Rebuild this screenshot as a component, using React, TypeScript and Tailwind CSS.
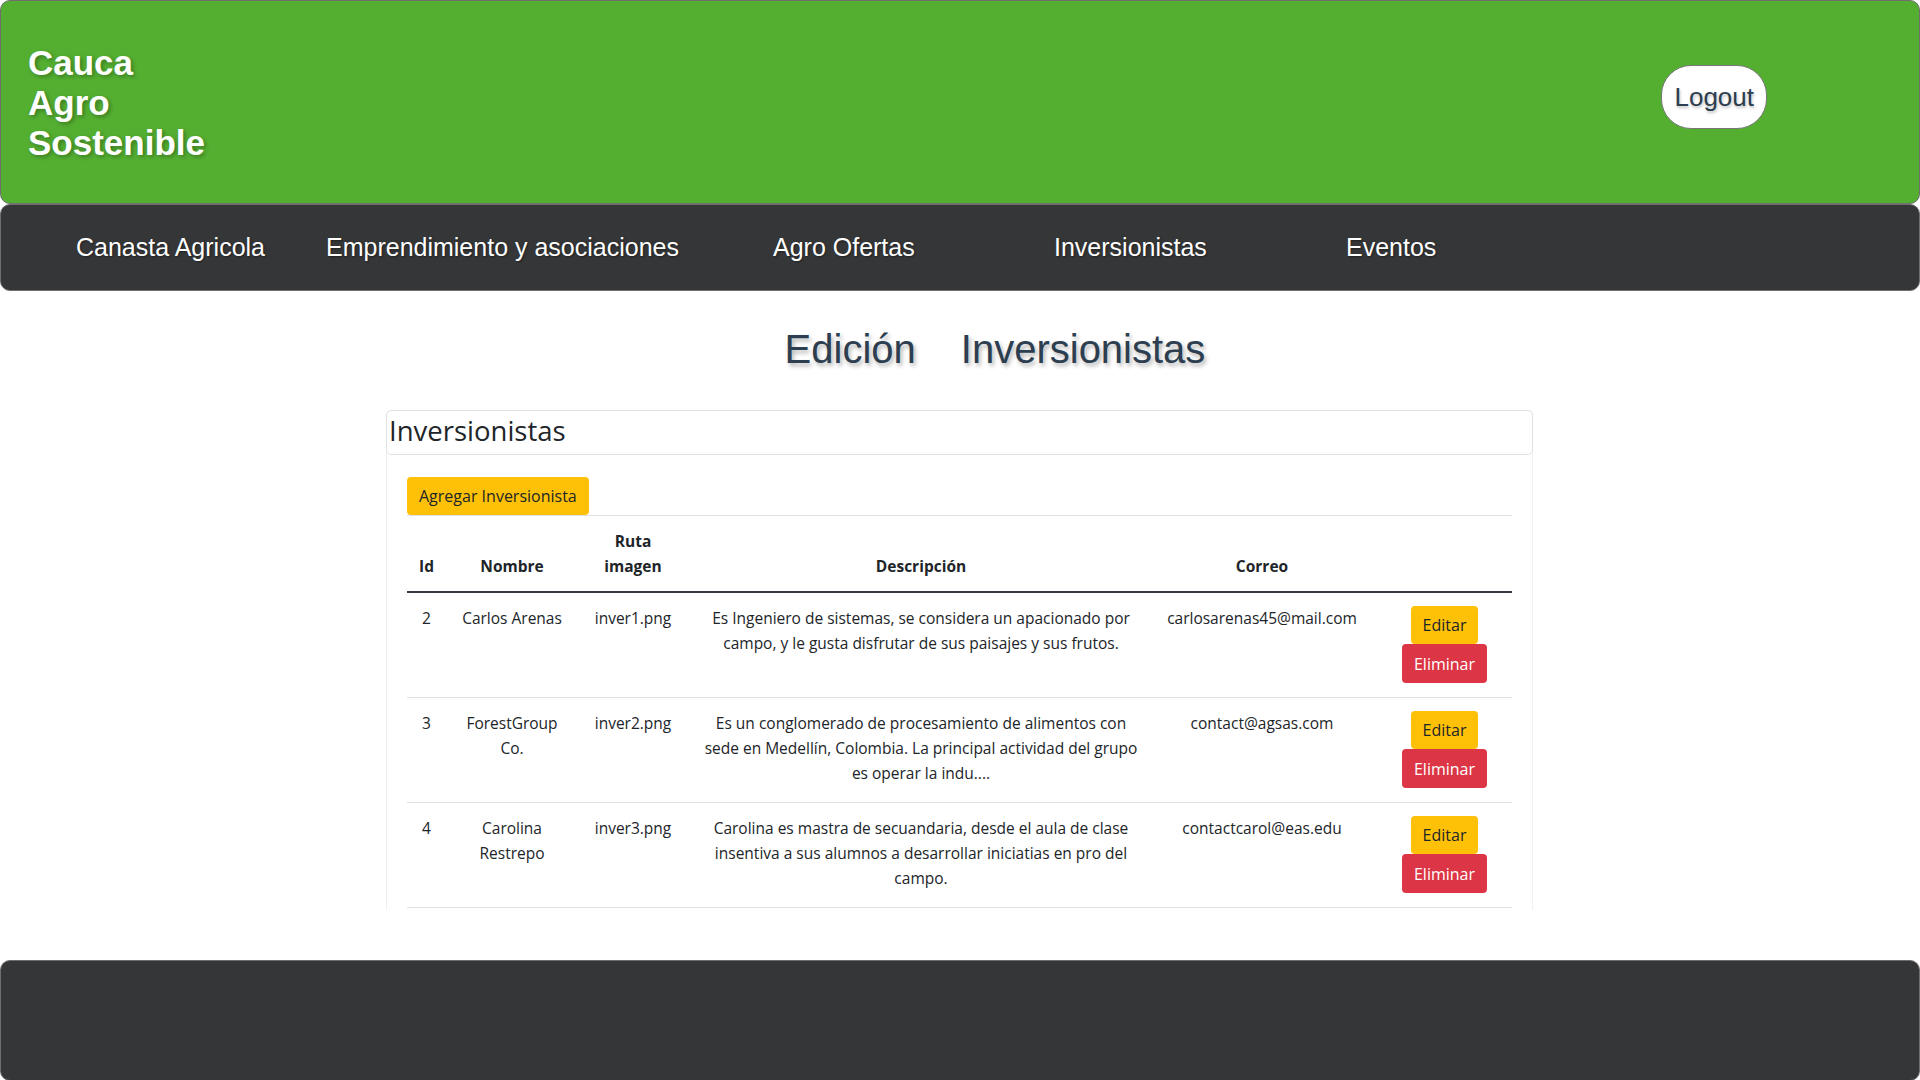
const navItems = [
  { label: 'Canasta Agricola', width: 'w-[250px]' },
  { label: 'Emprendimiento y asociaciones', width: 'w-[447px]' },
  { label: 'Agro Ofertas', width: 'w-[281px]' },
  { label: 'Inversionistas', width: 'w-[292px]' },
  { label: 'Eventos', width: '' },
];

const investors = [
  {
    id: 2,
    name: ['Carlos Arenas'],
    image: 'inver1.png',
    description: [
      'Es Ingeniero de sistemas, se considera un apacionado por',
      'campo, y le gusta disfrutar de sus paisajes y sus frutos.',
    ],
    email: 'carlosarenas45@mail.com',
  },
  {
    id: 3,
    name: ['ForestGroup', 'Co.'],
    image: 'inver2.png',
    description: [
      'Es un conglomerado de procesamiento de alimentos con',
      'sede en Medellín, Colombia. La principal actividad del grupo',
      'es operar la indu....',
    ],
    email: 'contact@agsas.com',
  },
  {
    id: 4,
    name: ['Carolina', 'Restrepo'],
    image: 'inver3.png',
    description: [
      'Carolina es mastra de secuandaria, desde el aula de clase',
      'insentiva a sus alumnos a desarrollar iniciatias en pro del',
      'campo.',
    ],
    email: 'contactcarol@eas.edu',
  },
];

export default function App() {
  return (
    <div className="min-h-screen bg-white font-['Liberation_Sans',Arial,sans-serif]">
      {/* encabezado */}
      <header className="h-[204px] bg-[#54af31] border border-[#6e6e6e] rounded-[10px] flex items-center justify-between pl-[27px] pr-[152px]">
        <h1 className="mt-[2px] text-[35px] leading-[40px] font-bold text-white [text-shadow:2px_2px_4px_rgba(0,0,0,0.3)]">
          Cauca
          <br />
          Agro
          <br />
          Sostenible
        </h1>
        <button className="mb-[10px] h-[64px] px-[12px] rounded-[30px] bg-white border border-[#777] text-[26px] text-[#2c3e50] [text-shadow:1px_2px_3px_rgba(0,0,0,0.25)]">
          Logout
        </button>
      </header>

      <nav className="h-[87px] bg-[#353638] border border-[#6e6e6e] rounded-[10px] flex items-center pl-[75px]">
        {navItems.map((item) => (
          <span
            key={item.label}
            className={`${item.width} shrink-0 text-[25px] text-white [text-shadow:1px_1px_2px_rgba(0,0,0,0.4)]`}
          >
            {item.label}
          </span>
        ))}
      </nav>

      <h2 className="mt-[35px] flex justify-center gap-[45px] pl-[70px] text-[40px] leading-[46px] text-[#2c3e50] [text-shadow:2px_3px_4px_rgba(0,0,0,0.3)]">
        <span>Edición</span>
        <span>Inversionistas</span>
      </h2>

      {/* tarjeta */}
      <section className="mt-[38px] ml-[386px] w-[1147px] border-x border-t border-[#f0f0f0] rounded-t-[5px] font-['Open_Sans',sans-serif] text-[#212529]">
        <div className="h-[45px] border border-[#e2e2e2] rounded-[5px] -mx-px -mt-px flex items-center pl-[2px] pb-[4px]">
          <h3 className="text-[27.5px] leading-none">Inversionistas</h3>
        </div>

        <div className="px-[20px] pt-[22px] pb-[2px]">
          <button className="h-[38px] px-[12px] rounded-[4px] bg-[#ffc107] text-[16px] text-[#212529]">
            Agregar Inversionista
          </button>

          <table className="w-full table-fixed border-collapse text-[15.5px] leading-[25px] text-center">
            <colgroup>
              <col className="w-[39px]" />
              <col className="w-[132px]" />
              <col className="w-[110px]" />
              <col className="w-[466px]" />
              <col className="w-[216px]" />
              <col className="w-[142px]" />
            </colgroup>
            <thead>
              <tr className="border-t border-[#dee2e6] border-b-2 border-b-[#343a40] font-bold">
                <th className="px-1 pt-[13px] pb-[12px] align-bottom">Id</th>
                <th className="px-1 pt-[13px] pb-[12px] align-bottom">Nombre</th>
                <th className="px-1 pt-[13px] pb-[12px] align-bottom">
                  Ruta
                  <br />
                  imagen
                </th>
                <th className="px-1 pt-[13px] pb-[12px] align-bottom">Descripción</th>
                <th className="px-1 pt-[13px] pb-[12px] align-bottom">Correo</th>
                <th className="px-1 pt-[13px] pb-[12px] align-bottom"></th>
              </tr>
            </thead>
            <tbody>
              {investors.map((inv) => (
                <tr key={inv.id} className="border-b border-[#dee2e6] align-top">
                  <td className="px-1 pt-[13px] pb-[14px]">{inv.id}</td>
                  <td className="px-1 pt-[13px] pb-[14px] whitespace-nowrap">
                    {inv.name.map((n) => (
                      <div key={n}>{n}</div>
                    ))}
                  </td>
                  <td className="px-1 pt-[13px] pb-[14px]">{inv.image}</td>
                  <td className="px-0 pt-[13px] pb-[14px] whitespace-nowrap">
                    {inv.description.map((line) => (
                      <div key={line}>{line}</div>
                    ))}
                  </td>
                  <td className="px-1 pt-[13px] pb-[14px]">{inv.email}</td>
                  <td className="pl-[7px] pr-0 pt-[13px] pb-[14px]">
                    <div className="flex flex-col items-center text-[16px] leading-6">
                      <button className="h-[38px] px-[12px] rounded-[4px] bg-[#ffc107] text-[#212529]">
                        Editar
                      </button>
                      <button className="h-[39px] px-[12px] rounded-[4px] bg-[#dc3545] text-white">
                        Eliminar
                      </button>
                    </div>
                  </td>
                </tr>
              ))}
            </tbody>
          </table>
        </div>
      </section>

      <footer className="mt-[50px] h-[121px] bg-[#353638] border border-[#6e6e6e] rounded-[10px]" />
    </div>
  );
}
